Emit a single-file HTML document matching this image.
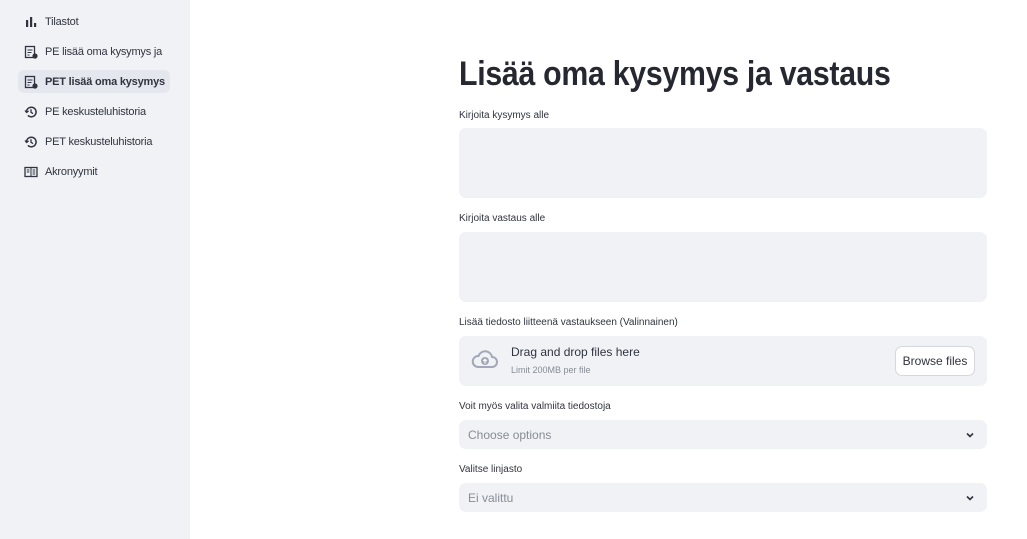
<!DOCTYPE html>
<html><head><meta charset="utf-8"><style>
*{margin:0;padding:0;box-sizing:border-box}
body{width:1027px;height:539px;overflow:hidden;background:#fff;font-family:"Liberation Sans",sans-serif;color:#31333f;position:relative}
.sb{position:absolute;left:0;top:0;width:190px;height:539px;background:#f0f2f6}
.it{position:absolute;left:18px;width:152px;height:23px;display:flex;align-items:center;padding-left:6px;font-size:11px;letter-spacing:-0.2px;white-space:nowrap;color:#31333f}
.it svg{width:14px;height:14px;margin-right:7px;flex:none}
.act{background:#e4e7ee;border-radius:6px;font-weight:bold}
.lbl{position:absolute;left:459px;font-size:10px;color:#31333f}
.box{position:absolute;left:459px;width:528px;background:#f0f2f6;border-radius:7px}
h1{position:absolute;left:459px;top:55px;font-size:34px;font-weight:bold;white-space:nowrap;transform:scaleX(0.89);transform-origin:left;color:#262730;letter-spacing:-0.3px}
.ph{position:absolute;left:9px;top:8px;font-size:12px;color:#8a8c96}
.chev{position:absolute;right:12px;top:10px}
</style></head><body>
<div class="sb">
<div class="it" style="top:10px"><svg viewBox="0 0 14 14"><rect x="2" y="5" width="2.2" height="7" fill="#31333f"/><rect x="6" y="2" width="2.2" height="10" fill="#31333f"/><rect x="10" y="8" width="2.2" height="4" fill="#31333f"/></svg>Tilastot</div>
<div class="it" style="top:40px"><svg viewBox="0 0 14 14"><rect x="1.5" y="1.5" width="9" height="11" fill="none" stroke="#31333f" stroke-width="1.3"/><path d="M3.5 5h5M3.5 7.5h4M3.5 10h2" stroke="#31333f"/><circle cx="11" cy="11" r="2.6" fill="#31333f"/></svg>PE lisää oma kysymys ja</div>
<div class="it act" style="top:70px"><svg viewBox="0 0 14 14"><rect x="1.5" y="1.5" width="9" height="11" fill="none" stroke="#31333f" stroke-width="1.3"/><path d="M3.5 5h5M3.5 7.5h4M3.5 10h2" stroke="#31333f"/><circle cx="11" cy="11" r="2.6" fill="#31333f"/></svg>PET lisää oma kysymys</div>
<div class="it" style="top:100px"><svg viewBox="0 0 14 14"><path d="M2.5 7a4.8 4.8 0 1 1 1.4 3.4" fill="none" stroke="#31333f" stroke-width="1.5"/><path d="M1 5.5l1.6 2 2-1.6" fill="none" stroke="#31333f" stroke-width="1.3"/><path d="M7 4.3v3l2 1.3" fill="none" stroke="#31333f" stroke-width="1.3"/></svg>PE keskusteluhistoria</div>
<div class="it" style="top:130px"><svg viewBox="0 0 14 14"><path d="M2.5 7a4.8 4.8 0 1 1 1.4 3.4" fill="none" stroke="#31333f" stroke-width="1.5"/><path d="M1 5.5l1.6 2 2-1.6" fill="none" stroke="#31333f" stroke-width="1.3"/><path d="M7 4.3v3l2 1.3" fill="none" stroke="#31333f" stroke-width="1.3"/></svg>PET keskusteluhistoria</div>
<div class="it" style="top:160px"><svg viewBox="0 0 14 14"><rect x="1" y="2.5" width="12" height="9" fill="none" stroke="#31333f" stroke-width="1.3"/><path d="M7 2.5v9M2.8 5h2.6M2.8 7h2.6M8.6 5h2.6M8.6 7h2.6M8.6 9h2.6" stroke="#31333f"/></svg>Akronyymit</div>
</div>
<h1>Lisää oma kysymys ja vastaus</h1>
<div class="lbl" style="top:110px">Kirjoita kysymys alle</div>
<div class="box" style="top:128px;height:70px"></div>
<div class="lbl" style="top:213px">Kirjoita vastaus alle</div>
<div class="box" style="top:232px;height:70px"></div>
<div class="lbl" style="top:317px">Lisää tiedosto liitteenä vastaukseen (Valinnainen)</div>
<div class="box" style="top:336px;height:50px">
<svg style="position:absolute;left:12px;top:13px" width="28" height="22" viewBox="0 0 28 22"><path d="M7 18h14a5 5 0 0 0 0-10 7 7 0 0 0-13.5-1A5.5 5.5 0 0 0 7 18z" fill="none" stroke="#a3a8b8" stroke-width="2"/><circle cx="14" cy="12" r="4" fill="#a3a8b8"/><path d="M14 14.5v-4M12.3 12l1.7-1.7 1.7 1.7" stroke="#fff" stroke-width="1.2" fill="none"/></svg>
<div style="position:absolute;left:52px;top:9px;font-size:12px;color:#31333f">Drag and drop files here</div>
<div style="position:absolute;left:52px;top:29px;font-size:9px;color:#8a8c96">Limit 200MB per file</div>
<div style="position:absolute;right:12px;top:10px;width:80px;height:30px;background:#fff;border:1px solid #d5d7dd;border-radius:7px;font-size:12px;display:flex;align-items:center;justify-content:center">Browse files</div>
</div>
<div class="lbl" style="top:401px">Voit myös valita valmiita tiedostoja</div>
<div class="box" style="top:420px;height:29px"><span class="ph">Choose options</span><svg class="chev" width="10" height="10" viewBox="0 0 10 10"><path d="M2 3.5l3 3 3-3" fill="none" stroke="#31333f" stroke-width="1.6"/></svg></div>
<div class="lbl" style="top:464px">Valitse linjasto</div>
<div class="box" style="top:483px;height:29px"><span class="ph">Ei valittu</span><svg class="chev" width="10" height="10" viewBox="0 0 10 10"><path d="M2 3.5l3 3 3-3" fill="none" stroke="#31333f" stroke-width="1.6"/></svg></div>
</body></html>
